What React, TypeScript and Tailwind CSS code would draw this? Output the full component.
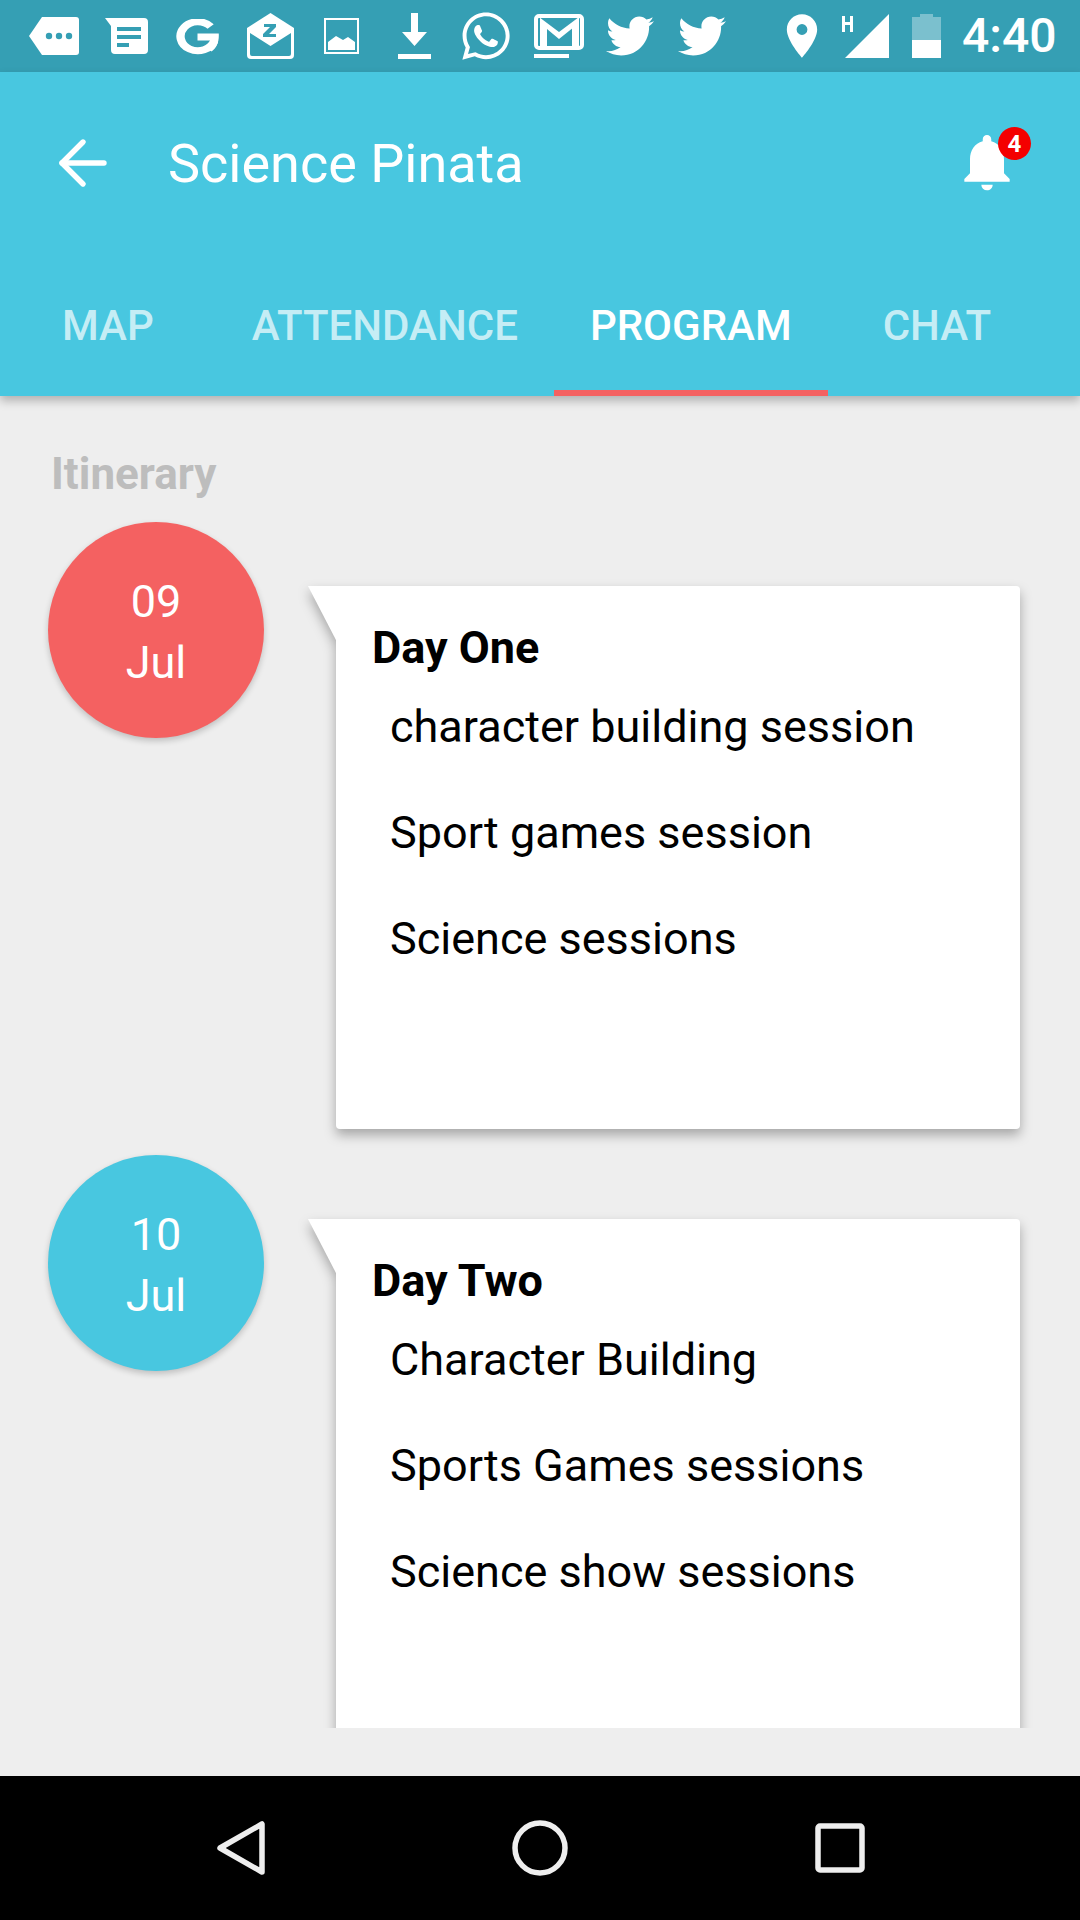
import { ArrowLeft } from 'lucide-react';
import { FaWhatsapp, FaTwitter } from 'react-icons/fa';
import { MdNotifications, MdPlace } from 'react-icons/md';

const days = [
  {
    date: '09',
    color: 'bg-[#f46161]',
    title: 'Day One',
    items: ['character building session', 'Sport games session', 'Science sessions'],
  },
  {
    date: '10',
    color: 'bg-[#48c7e0]',
    title: 'Day Two',
    items: ['Character Building', 'Sports Games sessions', 'Science show sessions'],
  },
];

function StatusBar() {
  return (
    <div className="relative flex h-[72px] items-center bg-[#359fb4] text-white">
      {/* message tag */}
      <svg width="50" height="38" viewBox="0 0 50 38" className="ml-[29px]">
        <path d="M13 0h34a3 3 0 0 1 3 3v32a3 3 0 0 1-3 3H13L0 19z" fill="white" />
        <circle cx="20" cy="19" r="3.2" fill="#359fb4" />
        <circle cx="30" cy="19" r="3.2" fill="#359fb4" />
        <circle cx="40" cy="19" r="3.2" fill="#359fb4" />
      </svg>
      {/* google messages style note */}
      <svg width="43" height="36" viewBox="0 0 43 36" className="ml-[26px]">
        <path d="M0 0h39a4 4 0 0 1 4 4v28a4 4 0 0 1-4 4H10a4 4 0 0 1-4-4V8z" fill="white" />
        <rect x="12" y="9" width="24" height="4" fill="#359fb4" />
        <rect x="12" y="17" width="24" height="4" fill="#359fb4" />
        <rect x="12" y="25" width="12" height="4" fill="#359fb4" />
      </svg>
      {/* google G */}
      <svg width="43" height="36" viewBox="0 0 36 36" preserveAspectRatio="none" className="ml-[28px] mt-[2px]">
        <path d="M29 7.500A14.500 14.500 0 1 0 32 22" fill="none" stroke="white" strokeWidth="7" />
        <path d="M18 14.500h17.800c.4 8-1.500 14-6 18l-5-5c2-1.500 3.500-3.500 4-6H18z" fill="white" />
      </svg>
      {/* snoozed envelope */}
      <svg width="47" height="46" viewBox="0 0 47 46" className="ml-[28px]">
        <path d="M23.500 0L47 15v27a4 4 0 0 1-4 4H4a4 4 0 0 1-4-4V15z" fill="white" />
        <path d="M3 20l20.500 13L44 20v21a2 2 0 0 1-2 2H5a2 2 0 0 1-2-2z" fill="#359fb4" />
        <path d="M17 11h12v3l-7 7h7v3H16v-3l7-7h-6z" fill="#359fb4" />
      </svg>
      {/* image */}
      <svg width="35" height="36" viewBox="0 0 35 36" className="ml-[30px]">
        <rect x="1" y="1" width="33" height="34" fill="none" stroke="white" strokeWidth="2" />
        <path d="M4 32V24l8-6 7 4 5-3 7 5v8z" fill="white" />
      </svg>
      {/* download */}
      <svg width="33" height="46" viewBox="0 0 33 46" className="ml-[39px]">
        <path d="M13 0h7v19h9L16.500 33 4 19h9z" fill="white" />
        <rect x="0" y="41" width="33" height="5" fill="white" />
      </svg>
      <FaWhatsapp className="ml-[28px] size-[54px]" />
      {/* gmail with underline */}
      <svg width="50" height="44" viewBox="0 0 50 44" className="ml-[21px]">
        <rect x="2" y="2" width="46" height="32" rx="3" fill="none" stroke="white" strokeWidth="4" />
        <path d="M5 3l20 15L45 3v6L25 25 13 15v18H6V3zM45 9v24h-7V14z" fill="white" />
        <rect x="0" y="40" width="35" height="4" fill="white" />
      </svg>
      <FaTwitter className="ml-[22px] size-[48px]" />
      <FaTwitter className="ml-[24px] size-[48px]" />
      <MdPlace className="ml-[50px] size-[52px]" />
      {/* signal with H */}
      <svg width="49" height="44" viewBox="0 0 49 44" className="ml-[14px]">
        <path d="M47 0v44H3z" fill="white" />
        <path d="M0 2h3v6h5V2h3v16H8v-7H3v7H0z" fill="white" />
      </svg>
      {/* battery */}
      <svg width="29" height="44" viewBox="0 0 29 44" className="ml-[21px]">
        <path d="M8 0h13v3h8v23H0V3h8z" fill="white" fillOpacity="0.35" />
        <rect x="0" y="26" width="29" height="18" fill="white" />
      </svg>
      <span className="ml-[21px] text-[48px] font-medium font-['Roboto',sans-serif] leading-none">4:40</span>
    </div>
  );
}

function Header() {
  return (
    <div className="relative z-10 flex h-[324px] flex-col bg-[#48c7e0] text-white shadow-[0_5px_9px_rgba(0,0,0,0.25)]">
      <div className="flex h-[184px] items-center">
        <ArrowLeft className="ml-[47px] -mt-[2px] size-[72px]" strokeWidth={1.8} />
        <h1 className="ml-[49px] text-[54px] leading-none">Science Pinata</h1>
        <div className="relative ml-auto mr-[59px] -mt-[4px]">
          <MdNotifications className="size-[68px]" />
          <span className="absolute -right-[10px] -top-[1px] flex size-[33px] items-center justify-center rounded-full bg-[#f40000] text-[24px] font-bold leading-none">
            4
          </span>
        </div>
      </div>
      <div className="relative mt-auto flex h-[136px] items-center pb-[4px] text-[42px] font-medium leading-none">
        <span className="ml-[62px] text-white/70">MAP</span>
        <span className="ml-[98px] text-white/70">ATTENDANCE</span>
        <span className="ml-[72px]">PROGRAM</span>
        <span className="ml-[91px] text-white/70">CHAT</span>
        <div className="absolute bottom-0 left-[554px] h-[6px] w-[274px] bg-[#f46161]" />
      </div>
    </div>
  );
}

function DayRow({ day }: { day: (typeof days)[number] }) {
  return (
    <div className="flex pl-[48px]">
      <div
        className={`flex size-[216px] shrink-0 flex-col items-center justify-center rounded-full pt-[4px] text-[45px] leading-[61px] text-white shadow-[0_3px_6px_rgba(0,0,0,0.2)] ${day.color}`}
      >
        <span>{day.date}</span>
        <span>Jul</span>
      </div>
      <div className="relative ml-[72px] mt-[64px] h-[543px] w-[684px] shrink-0 drop-shadow-[0_6px_6px_rgba(0,0,0,0.3)]">
        {/* speech tail */}
        <svg width="29" height="56" viewBox="0 0 29 56" className="absolute -left-[28px] top-0">
          <path d="M0 0h29v56z" fill="white" />
        </svg>
        <div className="h-full rounded-r-[4px] rounded-bl-[4px] bg-white pl-[36px] pt-[38px] text-black">
          <h2 className="text-[45px] font-bold leading-[48px]">{day.title}</h2>
          <ul className="mt-[24px] pl-[18px]">
            {day.items.map((item) => (
              <li key={item} className="h-[106px] text-[45px] leading-[61px]">
                {item}
              </li>
            ))}
          </ul>
        </div>
      </div>
    </div>
  );
}

export default function App() {
  return (
    <div className="flex h-[1920px] w-[1080px] flex-col overflow-hidden bg-[#eeeeee] font-['Roboto',sans-serif]">
      <StatusBar />
      <Header />
      <div className="h-[1332px] overflow-hidden">
        <p className="ml-[51px] mt-[53px] text-[44px] font-bold leading-[50px] text-[#bdbdbd]">Itinerary</p>
        <div className="mt-[23px] flex flex-col gap-[26px]">
          {days.map((day) => (
            <DayRow key={day.date} day={day} />
          ))}
        </div>
      </div>
      <div className="mt-[48px] flex h-[144px] items-center bg-black">
        <svg width="50" height="56" viewBox="0 0 50 56" className="ml-[216px]">
          <path d="M46 4v48L4 28z" fill="none" stroke="#eeeeee" strokeWidth="5.500" strokeLinejoin="round" />
        </svg>
        <svg width="56" height="56" viewBox="0 0 56 56" className="ml-[246px]">
          <circle cx="28" cy="28" r="25" fill="none" stroke="#eeeeee" strokeWidth="5.500" />
        </svg>
        <svg width="50" height="50" viewBox="0 0 50 50" className="ml-[247px]">
          <rect x="3" y="3" width="44" height="44" rx="2" fill="none" stroke="#eeeeee" strokeWidth="5.500" />
        </svg>
      </div>
    </div>
  );
}
